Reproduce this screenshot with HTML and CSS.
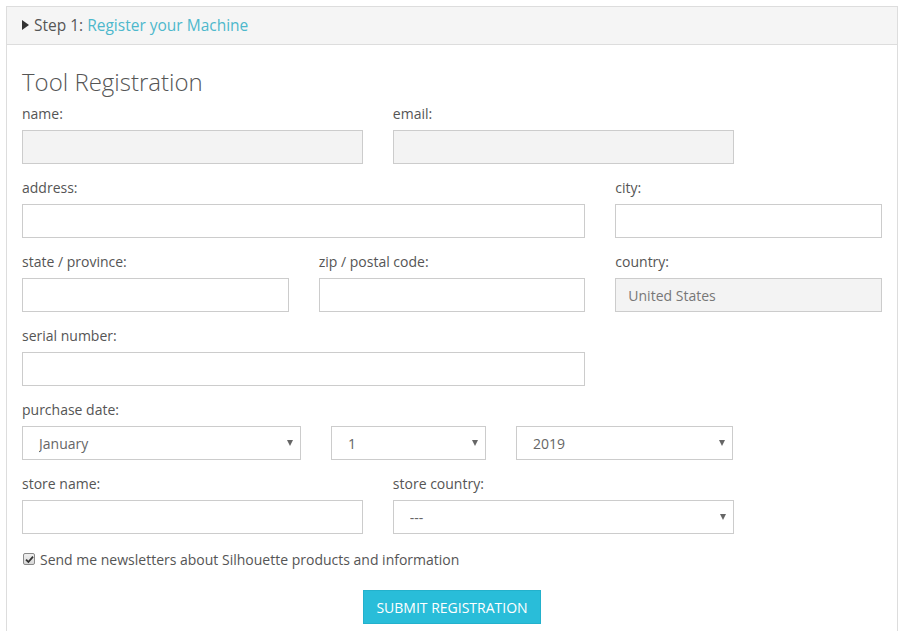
FILE: index.html
```html
<!DOCTYPE html>
<html>
<head>
<meta charset="utf-8">
<link rel="stylesheet" href="styles.css">
</head>
<body>
<div class="panel">
  <div class="panel-head">
    <span class="caret"></span><span class="step">Step 1:</span> <a class="step-link">Register your Machine</a>
  </div>
  <div class="panel-body">
    <h2 class="title">Tool Registration</h2>
    <div class="row">
      <div class="group span5">
        <label class="lbl">name:</label>
        <input class="field disabled" disabled>
      </div>
      <div class="group span5">
        <label class="lbl">email:</label>
        <input class="field disabled" disabled>
      </div>
    </div>
    <div class="row">
      <div class="group span8">
        <label class="lbl">address:</label>
        <input class="field">
      </div>
      <div class="group span4">
        <label class="lbl">city:</label>
        <input class="field">
      </div>
    </div>
    <div class="row">
      <div class="group span4">
        <label class="lbl">state / province:</label>
        <input class="field">
      </div>
      <div class="group span4">
        <label class="lbl">zip / postal code:</label>
        <input class="field">
      </div>
      <div class="group span4">
        <label class="lbl">country:</label>
        <input class="field disabled country" disabled value="United States">
      </div>
    </div>
    <div class="row">
      <div class="group span8">
        <label class="lbl">serial number:</label>
        <input class="field">
      </div>
    </div>
    <div class="group">
      <label class="lbl">purchase date:</label>
      <div class="date-row">
        <div class="sel"><select class="field select"><option>January</option></select></div>
        <div class="sel"><select class="field select"><option>1</option></select></div>
        <div class="sel"><select class="field select"><option>2019</option></select></div>
      </div>
    </div>
    <div class="row">
      <div class="group span5">
        <label class="lbl">store name:</label>
        <input class="field">
      </div>
      <div class="group span5">
        <label class="lbl">store country:</label>
        <div class="sel"><select class="field select"><option>---</option></select></div>
      </div>
    </div>
    <div class="check-row">
      <span class="check"><svg width="9" height="9" viewBox="0 0 9 9"><path d="M1 4.6 L3.4 7 L8 1.6" fill="none" stroke="#333" stroke-width="1.8"/></svg></span>
      <span class="check-text">Send me newsletters about Silhouette products and information</span>
    </div>
    <div class="actions">
      <button class="submit">SUBMIT REGISTRATION</button>
    </div>
  </div>
</div>
</body>
</html>
```
FILE: styles.css
```css
* { box-sizing: border-box; }
html, body { margin: 0; padding: 0; background: #fff; }
body {
  padding: 6px 7px 0 6px;
  font-family: "Open Sans", "DejaVu Sans", sans-serif;
  font-size: 14px;
  color: #555;
}
.panel {
  border: 1px solid #ddd;
  border-bottom: none;
  height: 640px;
}
.panel-head {
  background: #f5f5f5;
  border-bottom: 1px solid #ddd;
  height: 38px;
  padding: 0 15px 2px 15px;
  display: flex;
  align-items: center;
  font-size: 15.5px;
  color: #555;
}
.caret {
  width: 0; height: 0;
  border-top: 5.5px solid transparent;
  border-bottom: 5.5px solid transparent;
  border-left: 7px solid #333;
  margin-right: 5px;
  margin-top: 1px;
}
.step-link { color: #4db8cc; margin-left: 4px; }
.panel-body { padding: 20px 15px 0 15px; }
.title {
  margin: 0 0 5px 0;
  font-size: 24px;
  font-weight: 300;
  line-height: 34px;
  color: #555;
}
.row {
  display: grid;
  grid-template-columns: repeat(12, 1fr);
  column-gap: 30px;
}
.span4 { grid-column: span 4; }
.span5 { grid-column: span 5; }
.span8 { grid-column: span 8; }
.group { margin-bottom: 14px; }
.lbl {
  display: block;
  line-height: 20px;
  margin-bottom: 6px;
  color: #555;
}
.field {
  display: block;
  width: 100%;
  height: 34px;
  border: 1px solid #ccc;
  border-radius: 0;
  background: #fff;
  font-family: "Open Sans", "DejaVu Sans", sans-serif;
  font-size: 14px;
  color: #777;
  padding: 0 12px;
  margin: 0;
}
.field.disabled { background: #f3f3f3; }
.field.country { color: #777; }
.date-row {
  display: grid;
  grid-template-columns: 279px 155px 217px;
  column-gap: 30px;
}
.sel { position: relative; }
.sel::after {
  content: "";
  position: absolute;
  right: 8px;
  top: 14px;
  border-left: 3px solid transparent;
  border-right: 3px solid transparent;
  border-top: 6px solid #666;
}
.select {
  appearance: none;
  -webkit-appearance: none;
  padding-left: 16px;
  color: #666;
}
.check-row {
  display: flex;
  align-items: center;
  height: 20px;
  margin-top: 1px;
}
.check {
  display: flex;
  align-items: center;
  justify-content: center;
  width: 12px;
  height: 12px;
  margin: 0 5px 0 1px;
  border: 1px solid #8a8a8a;
  border-radius: 2px;
  background: linear-gradient(#f0f0f0, #d8d8d8);
}
.check-text { color: #555; }
.actions {
  display: flex;
  justify-content: center;
  margin-top: 21px;
}
.submit {
  background: #29bdd9;
  color: #fff;
  border: 1px solid #23b1cc;
  height: 34px;
  padding: 0 12px;
  font-family: "Open Sans", "DejaVu Sans", sans-serif;
  font-size: 14px;
  width: 178px;
}
```
